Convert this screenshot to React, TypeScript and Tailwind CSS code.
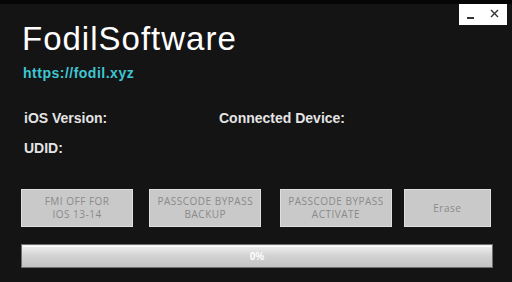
const buttons = [
  { label: ["FMI OFF FOR", "IOS 13-14"], box: "w-[113px]" },
  { label: ["PASSCODE BYPASS", "BACKUP"], box: "ml-[16px] w-[113px]" },
  { label: ["PASSCODE BYPASS", "ACTIVATE"], box: "ml-[19px] w-[112px]" },
  { label: ["Erase"], box: "ml-[12px] w-[88px]" },
];

export default function App() {
  return (
    <div className="h-[282px] w-[512px] overflow-hidden bg-[#141415] font-['Liberation_Sans',Arial,sans-serif]">
      <div className="h-[4px] bg-[#050505]" />
      <div className="relative px-[21px]">
        <div className="absolute right-[5px] top-0 flex h-[21px] w-[48px] items-center justify-between bg-white px-[8px]">
          <span className="mt-[6px] block h-[2px] w-[7px] bg-[#333]" />
          <svg width="9" height="9" viewBox="0 0 9 9" className="mb-[2px]">
            <path d="M1 1 L8 8 M8 1 L1 8" stroke="#333" strokeWidth="1.4" />
          </svg>
        </div>

        <h1 className="ml-[1px] pt-[17px] text-[33px] leading-[36px] tracking-[1px] text-white">FodilSoftware</h1>
        <p className="ml-[2px] mt-[8px] text-[14px] font-bold leading-[16px] tracking-[0.5px] text-[#3fc6d2]">https://fodil.xyz</p>

        <div className="ml-[3px] mt-[29px] grid grid-cols-[195px_1fr] text-[14px] font-bold leading-[16px] text-[#e4e4e4]">
          <span>iOS Version:</span>
          <span>Connected Device:</span>
        </div>
        <p className="ml-[3px] mt-[14px] text-[14px] font-bold leading-[16px] text-[#e4e4e4]">UDID:</p>

        <div className="mt-[33px] flex">
          {buttons.map((button) => (
            <div
              key={button.label.join(" ")}
              className={`${button.box} flex h-[38px] flex-col items-center justify-center border border-[#dedede] bg-[#c9c9c9] text-center font-['Open_Sans',sans-serif] text-[10px] leading-[13px] tracking-[0.5px] text-[#8a8a8a]`}
            >
              {button.label.map((line) => (
                <span key={line}>{line}</span>
              ))}
            </div>
          ))}
        </div>

        <div className="mt-[17px] h-[24px] w-[472px] border border-[#707070] bg-gradient-to-b from-[#f2f2f2] via-[#d2d2d2] to-[#c4c4c4] p-[1px]">
          <div className="flex h-full items-center justify-center border-t border-white text-[10px] font-bold text-white">
            0%
          </div>
        </div>
      </div>
    </div>
  );
}
